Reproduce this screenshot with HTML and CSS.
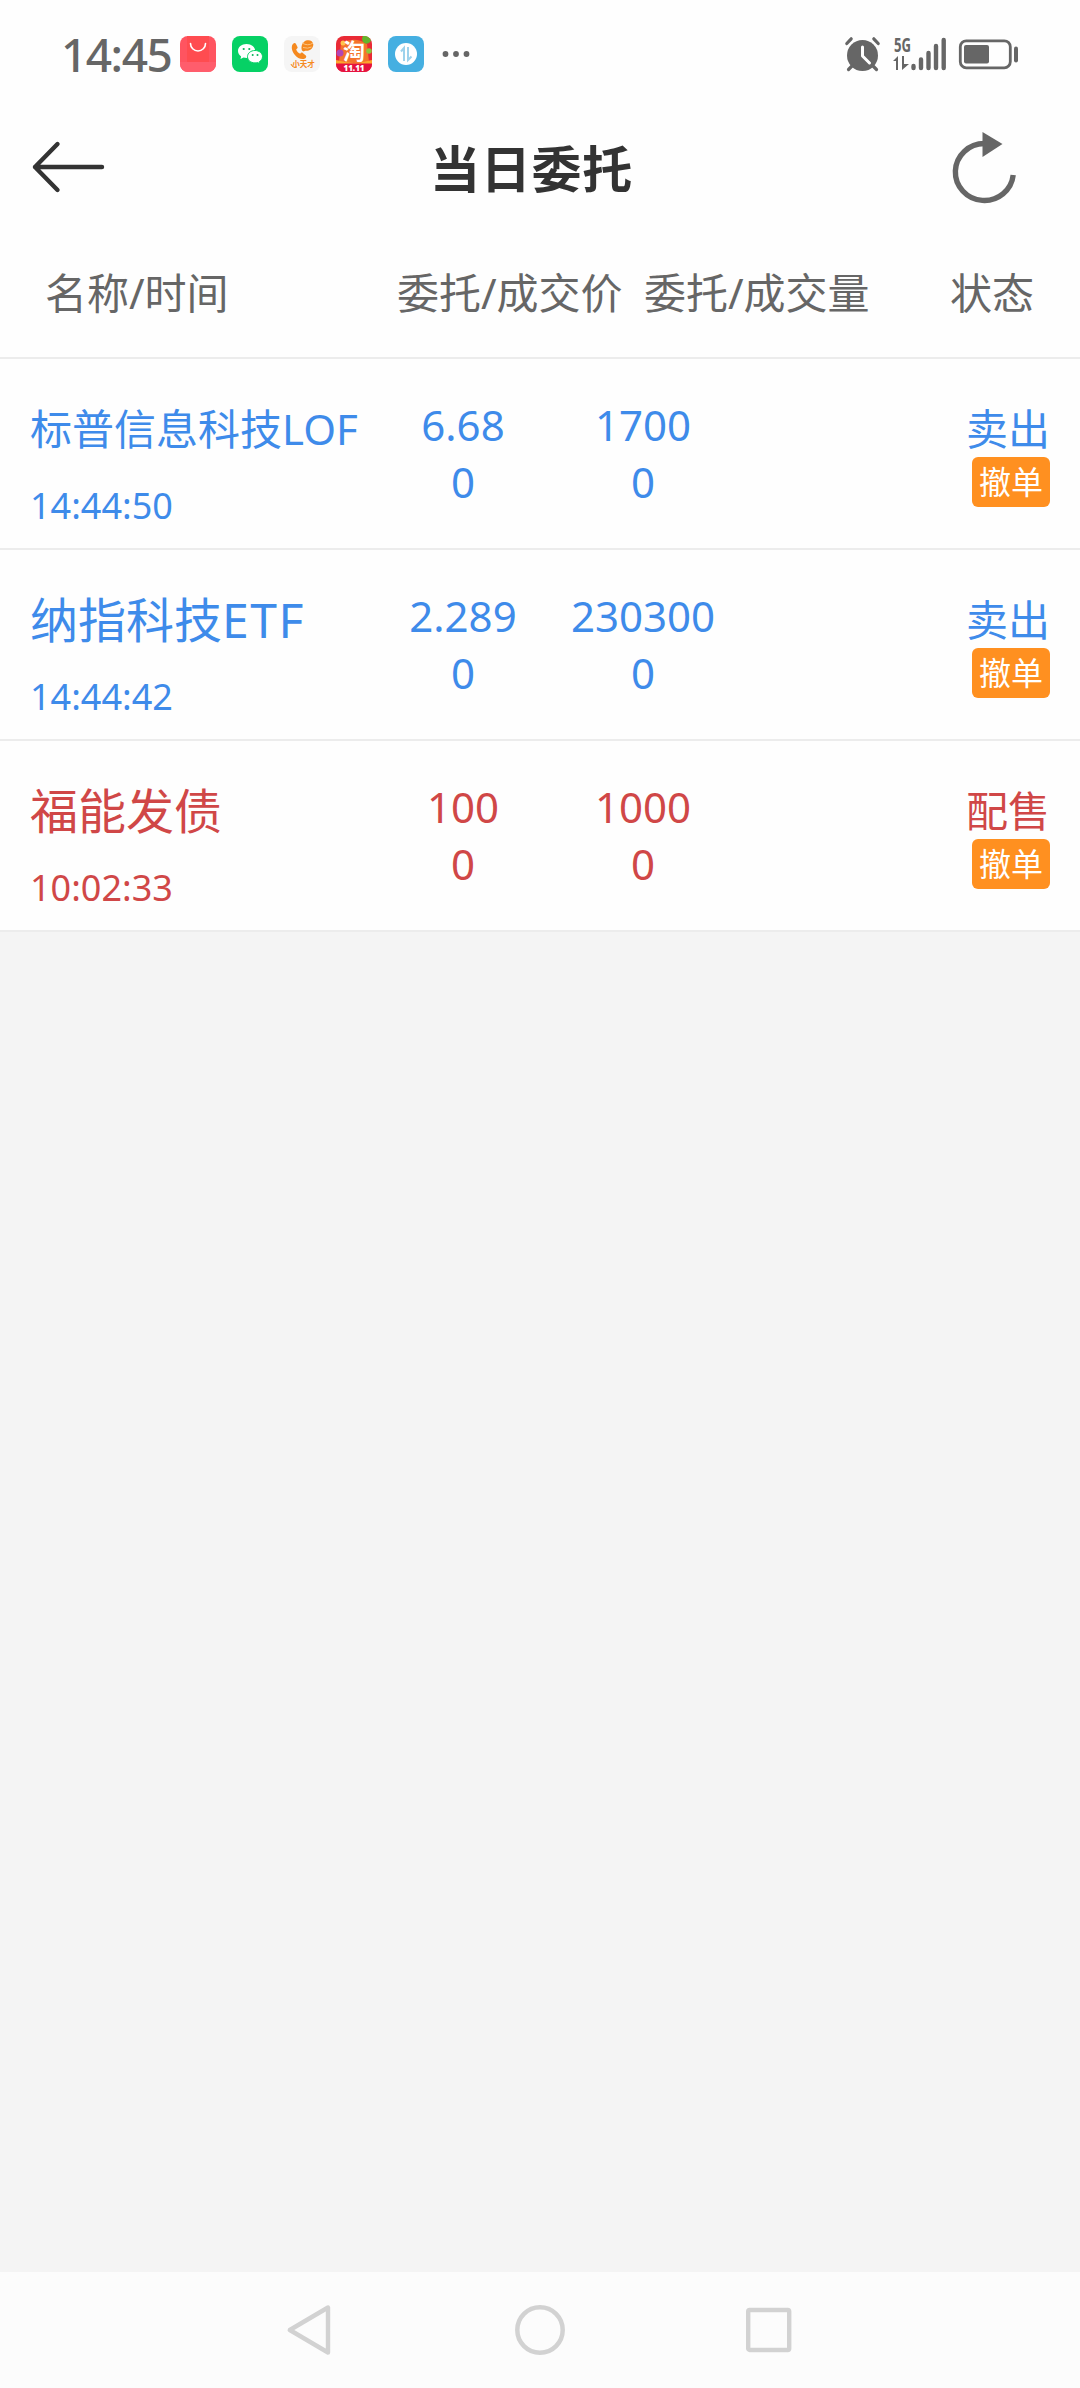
FILE: index.html
```
<!DOCTYPE html>
<html lang="zh-CN">
<head>
    <meta charset="UTF-8">
    <title>当日委托</title>
    <link rel="stylesheet" href="styles.css">
</head>
<body>
    <!-- Phone status bar -->
    <div class="status-bar">
        <span class="clock">14:45</span>
        <div class="app-icons">
            <svg width="36" height="36" viewBox="0 0 36 36">
                <rect width="36" height="36" rx="8" fill="#ff5460"/>
                <rect x="7" width="22" height="26" fill="#ff4c50"/>
                <path d="M0 26h36v2a8 8 0 0 1-8 8H8a8 8 0 0 1-8-8z" fill="#ff5d6c"/>
                <path d="M10.500 7.500a7.500 7.500 0 0 0 15 0" fill="none" stroke="#fff" stroke-width="1.600" stroke-linecap="round"/>
            </svg>
            <svg width="36" height="36" viewBox="0 0 36 36">
                <rect width="36" height="36" rx="8" fill="#06d165"/>
                <path d="M14.500 8C9.500 8 6 11.200 6 15c0 2.200 1.200 4.200 3.100 5.400L8.500 23l3-1.500c1 .3 2 .4 3 .4 5 0 8.700-3 8.700-6.900S19.500 8 14.500 8z" fill="#fff"/>
                <path d="M23 14.500c-4.300 0-7.500 2.700-7.500 6.200s3.200 6.200 7.500 6.200c.9 0 1.800-.1 2.600-.4l2.400 1.300-.6-2.200c1.900-1.100 3.100-2.900 3.100-4.900 0-3.500-3.200-6.200-7.500-6.200z" fill="#fff" stroke="#06d165" stroke-width="1"/>
                <g fill="#06b459">
                    <circle cx="11.700" cy="13" r="1.100"/><circle cx="17.300" cy="13" r="1.100"/>
                    <circle cx="20.700" cy="19" r="1"/><circle cx="25.500" cy="19" r="1"/>
                </g>
            </svg>
            <svg width="36" height="36" viewBox="0 0 36 36">
                <rect width="36" height="36" rx="8" fill="#f5f5f5"/>
                <path d="M9 8c-2 2-1.500 6.500 1.500 10.500s7.500 5.500 10.500 4c1.200-.7 1.700-2 .8-3l-3-2.600c-1-.7-2-.2-2.600.8-2-.7-3.500-2.400-4-4.500 1-.3 1.700-1.200 1.300-2.200L12 8c-.6-1.200-2-1.200-3 0z" fill="#f5891f"/>
                <path d="M18 14.500c-1.500-4 .5-9 5-10.200 3-.7 6 1 6.300 4 .2 4.200-4 7.200-8 6.400l-1.800.8z" fill="#f5891f"/>
                <path d="M18 7q6 3.500 11 0M19 11.500q5 1.500 8.500-.5" fill="none" stroke="#fbc27e" stroke-width="1"/>
                <text class="brand-xtc" x="19.500" y="30.500" text-anchor="middle">小天才</text>
                <path d="M7 28q1 4 6 3" fill="none" stroke="#f5891f" stroke-width="1"/>
            </svg>
            <svg width="36" height="36" viewBox="0 0 36 36">
                <rect width="36" height="36" rx="8" fill="#e92a35"/>
                <path d="M5 7q14-7 26 1l2 18H3z" fill="#f4732c"/>
                <path d="M27 0h2a7 7 0 0 1 6 5q-4 5-8 1-2-3 0-6z" fill="#63b52d"/>
                <circle cx="7" cy="7" r="2.500" fill="#ffc34d"/>
                <circle cx="4" cy="17" r="3.500" fill="#b245b6"/>
                <circle cx="33" cy="15" r="2.800" fill="#8cc63b"/>
                <path d="M0 24q18 5 36 0v4H0z" fill="#fba52e"/>
                <path d="M0 27.500h36v.5a8 8 0 0 1-8 8H8a8 8 0 0 1-8-8z" fill="#e6123f"/>
                <text class="brand-tb" x="18" y="23" text-anchor="middle">淘</text>
                <text class="brand-tb-date" x="18" y="34.500" text-anchor="middle">11.11</text>
            </svg>
            <svg width="36" height="36" viewBox="0 0 36 36">
                <rect width="36" height="36" rx="8" fill="#45afe1"/>
                <circle cx="18" cy="18" r="11" fill="#fff"/>
                <path d="M13 15.500l3-3.500v13M20 11v13l3.500-3.500" fill="none" stroke="#9dd2ec" stroke-width="2"/>
            </svg>
        </div>
        <svg class="more" width="28" height="8" viewBox="0 0 28 8">
            <g fill="#666"><circle cx="3.500" cy="4" r="2.900"/><circle cx="14" cy="4" r="2.900"/><circle cx="24.500" cy="4" r="2.900"/></g>
        </svg>
        <div class="system-icons">
            <!-- Alarm -->
            <svg width="36" height="36" viewBox="0 0 36 36">
                <circle cx="17.500" cy="19.500" r="15.500" fill="#666"/>
                <path d="M1.800 7.500l4.400-4.700M33.200 7.500l-4.400-4.700M7 30l-3.500 3.500M28 30l3.500 3.500" stroke="#666" stroke-width="3.200" stroke-linecap="round"/>
                <path d="M17.500 11v9l7 7" fill="none" stroke="#fff" stroke-width="3" stroke-linecap="round" stroke-linejoin="round"/>
            </svg>
            <!-- Network -->
            <svg width="54" height="36" viewBox="0 0 54 36">
                <text class="net-type" x="1" y="16" textLength="17" lengthAdjust="spacingAndGlyphs">5G</text>
                <path d="M0 25l5-5v14H3v-9zM9 20h2v8h5l-7 6z" fill="#666"/>
                <path d="M20.500 30v2M28 23.500v8.500M35.500 17v15M43 10v22M50.700 4v28" stroke="#666" stroke-width="4.400" stroke-linecap="round"/>
            </svg>
            <!-- Battery -->
            <svg width="60" height="36" viewBox="0 0 60 36">
                <rect x="1.300" y="4.800" width="50" height="27" rx="6" fill="none" stroke="#666" stroke-width="2.800"/>
                <rect x="5" y="9" width="25" height="18.500" rx="2" fill="#666"/>
                <rect x="55" y="10.500" width="4" height="16" rx="2" fill="#666"/>
            </svg>
        </div>
    </div>

    <!-- Page header -->
    <header class="title-bar">
        <svg width="74" height="54" viewBox="0 0 74 54">
            <path d="M26.500 4L4 27l22.500 23M4 27h67" fill="none" stroke="#333" stroke-width="4.400" stroke-linecap="round" stroke-linejoin="round"/>
        </svg>
        <h1>当日委托</h1>
        <svg width="66" height="74" viewBox="0 0 66 74">
            <path d="M32.500 13.500A29 28.500 0 1 0 61.200 45" fill="none" stroke="#666" stroke-width="5.400"/>
            <path d="M30.500 2v25L50.500 14z" fill="#666"/>
        </svg>
    </header>

    <!-- Column names -->
    <div class="columns">
        <span>名称/时间</span>
        <span>委托/成交价</span>
        <span>委托/成交量</span>
        <span>状态</span>
    </div>

    <!-- Today's orders -->
    <div class="order sell">
        <div class="name-cell">
            <div class="name long">标普信息科技LOF</div>
            <div class="time">14:44:50</div>
        </div>
        <div class="num">6.68<br>0</div>
        <div class="num">1700<br>0</div>
        <div class="state">卖出<button>撤单</button></div>
    </div>
    <div class="order sell">
        <div class="name-cell">
            <div class="name">纳指科技<span class="code">ETF</span></div>
            <div class="time">14:44:42</div>
        </div>
        <div class="num">2.289<br>0</div>
        <div class="num">230300<br>0</div>
        <div class="state">卖出<button>撤单</button></div>
    </div>
    <div class="order buy">
        <div class="name-cell">
            <div class="name">福能发债</div>
            <div class="time">10:02:33</div>
        </div>
        <div class="num">100<br>0</div>
        <div class="num">1000<br>0</div>
        <div class="state">配售<button>撤单</button></div>
    </div>

    <!-- System navigation -->
    <nav class="nav-bar">
        <svg width="50" height="54" viewBox="0 0 50 54">
            <path d="M42 4.500v45L3.800 27z" fill="none" stroke="#d2d2d2" stroke-width="4.400" stroke-linejoin="round"/>
        </svg>
        <svg width="50" height="54" viewBox="0 0 50 54">
            <circle cx="25" cy="27" r="22.700" fill="none" stroke="#d2d2d2" stroke-width="4.500"/>
        </svg>
        <svg width="50" height="54" viewBox="0 0 50 54">
            <rect x="4.200" y="7" width="41" height="40" rx="1.500" fill="none" stroke="#d2d2d2" stroke-width="4.400"/>
        </svg>
    </nav>
</body>
</html>
```
FILE: styles.css
```
* {
    box-sizing: border-box;
}

body {
    margin: 0;
    min-height: 2388px;
    display: flex;
    flex-direction: column;
    background-color: #f4f4f4;
    font-family: "Noto Sans", "Noto Sans CJK SC", sans-serif;
    font-size: 42px;
}

svg {
    display: block;
    flex: none;
    overflow: visible;
}

/* Status bar */
.status-bar {
    height: 108px;
    padding: 0 61px 0 61px;
    display: flex;
    align-items: center;
    background-color: #fefefe;
}

.clock {
    width: 119px;
    font-size: 46px;
    font-weight: 500;
    letter-spacing: -1.5px;
    line-height: 60px;
    color: #666;
}

.app-icons {
    display: flex;
    gap: 16px;
}

.more {
    margin-left: 18px;
}

.system-icons {
    margin-left: auto;
    display: flex;
    gap: 12px;
}

.brand-xtc {
    font-size: 7.5px;
    font-weight: 700;
    fill: #f5891f;
}

.brand-tb {
    font-size: 22px;
    font-weight: 700;
    fill: #fff;
}

.brand-tb-date {
    font-size: 8px;
    font-weight: 900;
    fill: #fff;
}

.net-type {
    font-size: 19px;
    font-weight: 700;
    fill: #666;
}

/* Title bar */
.title-bar {
    height: 118px;
    padding: 0 62px 0 31px;
    display: flex;
    align-items: center;
    justify-content: space-between;
    background-color: #fefefe;
}

.title-bar h1 {
    margin: 0;
    padding: 3px 0 0 6px;
    font-size: 50px;
    letter-spacing: 0.7px;
    line-height: 60px;
    color: #333;
}

/* Column names */
.columns {
    height: 133px;
    padding: 0 46px 3px 45px;
    display: grid;
    grid-template-columns: 352px 247px 1fr auto;
    align-items: center;
    border-bottom: 2px solid #ececec;
    background-color: #fefefe;
    color: #666;
}

/* Order rows */
.order {
    height: 191px;
    padding: 0 30px;
    display: grid;
    grid-template-columns: 343px 180px 180px 1fr;
    border-bottom: 2px solid #ececec;
    background-color: #fefefe;
}

.sell {
    color: #3e8bea;
}

.buy {
    color: #d04747;
}

.name {
    margin-top: 40px;
    font-size: 48px;
    line-height: 60px;
    white-space: nowrap;
}

.name.long {
    font-size: 42px;
}

.code {
    letter-spacing: 1.5px;
}

.time {
    margin-top: 22px;
    font-size: 36px;
    line-height: 50px;
}

.num {
    padding-top: 37px;
    line-height: 57px;
    text-align: center;
}

.state {
    padding-top: 41px;
    display: flex;
    flex-direction: column;
    align-items: flex-end;
    line-height: 57px;
}

.state button {
    width: 78px;
    height: 50px;
    padding: 0;
    border: none;
    border-radius: 6px;
    background-color: #ff9020;
    color: #fff;
    font-family: inherit;
    font-size: 32px;
    line-height: 50px;
}

/* Bottom navigation */
.nav-bar {
    height: 116px;
    margin-top: auto;
    padding: 0 286px;
    display: flex;
    align-items: center;
    justify-content: space-between;
    background-color: #fcfcfc;
}
```
